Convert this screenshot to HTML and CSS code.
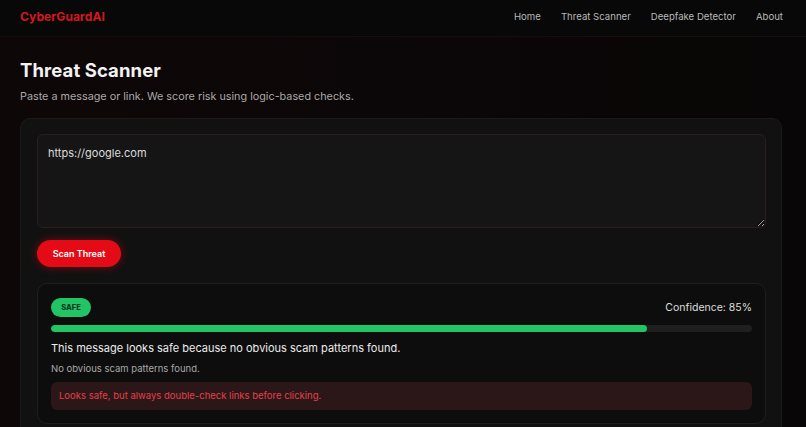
FILE: index.html
```html
<!DOCTYPE html>
<html>
<head>
	<meta charset="UTF-8">
	<title>CyberGuardAI - Threat Scanner</title>
	<link rel="stylesheet" href="styles.css">
</head>
<body>
	<header class="navbar">
		<a class="logo" href="#">CyberGuardAI</a>
		<nav class="nav-links">
			<a href="#">Home</a>
			<a href="#">Threat Scanner</a>
			<a href="#">Deepfake Detector</a>
			<a href="#">About</a>
		</nav>
	</header>

	<main class="page">
		<h1 class="page-title">Threat Scanner</h1>
		<p class="page-sub">Paste a message or link. We score risk using logic-based checks.</p>

		<section class="scan-card">
			<textarea class="scan-input">https://google.com</textarea>
			<button class="scan-btn">Scan Threat</button>

			<div class="result">
				<div class="result-head">
					<span class="badge-safe">SAFE</span>
					<span class="confidence">Confidence: 85%</span>
				</div>
				<div class="bar"><div class="bar-fill" style="width:85%"></div></div>
				<p class="result-main">This message looks safe because no obvious scam patterns found.</p>
				<p class="result-note">No obvious scam patterns found.</p>
				<div class="result-tip">Looks safe, but always double-check links before clicking.</div>
			</div>
		</section>
	</main>
</body>
</html>
```

FILE: styles.css
```css
*{
	box-sizing:border-box;
	margin:0;
	padding:0;
}

html,body{
	height:100%;
	overflow:hidden;
}

body{
	font-family:"Inter","DejaVu Sans",sans-serif;
	background:#0b0708;
	background:linear-gradient(90deg,#0d0708 0%,#0b0607 60%,#080606 100%);
	color:#eee;
}

/* top bar */
.navbar{
	height:37px;
	display:flex;
	align-items:center;
	justify-content:space-between;
	padding:0 23px 3px 20px;
	background:#080808;
	border-bottom:1px solid #1a0b0c;
}

.logo{
	color:#d6161e;
	font-weight:700;
	font-size:12px;
	text-decoration:none;
	letter-spacing:0.1px;
}

.nav-links{
	display:flex;
	gap:20px;
}

.nav-links a{
	color:#b8b8b8;
	font-size:9.6px;
	text-decoration:none;
}

/* page */
.page{
	padding:22px 24px 0 20px;
}

.page-title{
	font-size:18.5px;
	font-weight:700;
	color:#f2f2f2;
	letter-spacing:0.1px;
}

.page-sub{
	margin-top:9px;
	font-size:10.8px;
	color:#a9a9a9;
}

.scan-card{
	margin-top:15px;
	background:#111;
	border:1px solid #1c1a1a;
	border-radius:10px;
	padding:15px 15px 20px 16px;
	display:flex;
	flex-direction:column;
	align-items:flex-start;
}

.scan-input{
	width:100%;
	height:94px;
	background:#151515;
	border:1px solid #2b1e1f;
	border-radius:6px;
	color:#dcdcdc;
	font-family:inherit;
	font-size:11px;
	padding:11px 10px;
	resize:vertical;
	outline:none;
}

.scan-btn{
	margin-top:12px;
	width:84px;
	height:27px;
	border:none;
	border-radius:14px;
	background:#e50b16;
	color:#fff;
	font-family:inherit;
	font-size:9px;
	font-weight:600;
	box-shadow:0 0 10px rgba(229,11,22,0.45);
}

.result{
	margin-top:16px;
	width:100%;
	background:#0d0d0d;
	border:1px solid #1f1f1f;
	border-radius:10px;
	padding:14px 13px 13px 13px;
}

.result-head{
	display:flex;
	justify-content:space-between;
	align-items:center;
}

.badge-safe{
	display:inline-block;
	width:40px;
	height:19px;
	line-height:19px;
	text-align:center;
	border-radius:10px;
	background:#22c466;
	color:#0c3a1c;
	font-size:7.5px;
	font-weight:800;
}

.confidence{
	font-size:10.5px;
	color:#dedede;
}

.bar{
	margin-top:8px;
	height:7px;
	background:#1f1f1f;
	border-radius:4px;
	overflow:hidden;
}

.bar-fill{
	height:100%;
	background:#22c466;
	border-radius:4px;
}

.result-main{
	margin-top:9px;
	font-size:11px;
	color:#ececec;
}

.result-note{
	margin-top:8px;
	font-size:9.5px;
	color:#a8a8a8;
}

.result-tip{
	margin-top:8px;
	height:28px;
	line-height:28px;
	padding:0 8px;
	border-radius:6px;
	background:#2c1718;
	color:#e2404a;
	font-size:9.5px;
}
```
